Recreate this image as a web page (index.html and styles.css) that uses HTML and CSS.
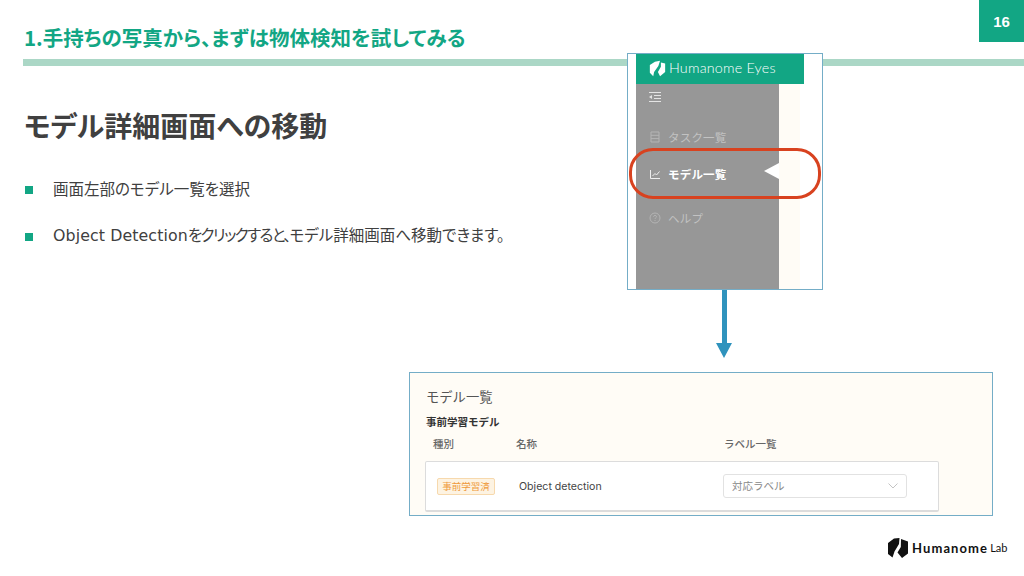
FILE: index.html
```html
<!DOCTYPE html>
<html lang="ja">
<head>
<meta charset="utf-8">
<title>モデル詳細画面への移動</title>
<link rel="stylesheet" href="styles.css">
</head>
<body>
<div class="slide">
  <div class="page-no">16</div>
  <header class="head">
    <h1 class="head-title">1.手持ちの写真から、まずは物体検知を試してみる</h1>
    <div class="head-bar"></div>
  </header>
  <main class="body">
    <h2 class="sub-title">モデル詳細画面への移動</h2>
    <ul class="points">
      <li class="point"><span class="mark"></span><span>画面左部のモデル一覧を選択</span></li>
      <li class="point"><span class="mark"></span><span><span class="latin">Object Detection</span><span class="tight">をクリックすると、</span>モデル詳細画面へ移動できます。</span></li>
    </ul>
  </main>

  <section class="shot-nav">
    <div class="nav-brand">
      <svg class="brand-icon" viewBox="0 0 20 20"><path d="M7 2L13 1L11 7L6 14L5 19L1 15V6Z" fill="#fff"/><path d="M14 3L19 4V14L13 19L10.500 14L14 8Z" fill="#fff"/></svg>
      <span class="brand-text">Humanome Eyes</span>
    </div>
    <div class="nav-main">
      <nav class="nav-side">
        <svg class="nav-toggle" viewBox="0 0 12 10"><path d="M0 .5H12M5 3.500H12M5 6.500H12M0 9.500H12" stroke="#e4e4e4" fill="none"/><path d="M0 5L3 3V7Z" fill="#e4e4e4"/></svg>
        <div class="nav-item">
          <svg class="nav-icon" viewBox="0 0 12 12"><path d="M2 1H10V11H2ZM2 4.300H10M2 7.600H10" fill="none" stroke="#b4b4b4"/></svg>
          <span>タスク一覧</span>
        </div>
        <div class="nav-item nav-on">
          <svg class="nav-icon" viewBox="0 0 12 12"><path d="M1.500 2V10.500H11M3.500 8L6 5.500L7.500 7L10.500 3.500" fill="none" stroke="#eee"/></svg>
          <span>モデル一覧</span>
        </div>
        <div class="nav-item nav-help">
          <svg class="nav-icon" viewBox="0 0 12 12"><circle cx="6" cy="6" r="5" fill="none" stroke="#b4b4b4"/><path d="M4.500 4.700C4.600 3 7.500 3 7.500 4.700C7.500 5.800 6 5.800 6 7" fill="none" stroke="#b4b4b4"/><path d="M5.500 8h1v1h-1z" fill="#b4b4b4"/></svg>
          <span>ヘルプ</span>
        </div>
      </nav>
      <div class="nav-cream"></div>
    </div>
    <div class="nav-pointer"></div>
    <div class="nav-ring"></div>
  </section>

  <div class="flow-arrow"><div class="flow-line"></div><div class="flow-head"></div></div>

  <section class="shot-list">
    <div class="list-title">モデル一覧</div>
    <div class="list-sub">事前学習モデル</div>
    <div class="list-cols">
      <span>種別</span><span>名称</span><span>ラベル一覧</span>
    </div>
    <div class="list-card">
      <div class="tag-cell"><span class="tag">事前学習済</span></div>
      <div class="model-name">Object detection</div>
      <div class="select">
        <span>対応ラベル</span>
        <svg class="chev" viewBox="0 0 10 6"><path d="M.5 .5L5 5L9.500 .5" fill="none" stroke="#c4c4c4"/></svg>
      </div>
    </div>
  </section>

  <footer class="logo">
    <svg class="logo-icon" viewBox="0 0 20 20"><path d="M6 .5L11.500 0L11 6L6.500 13.500L4.500 19.500L0 16V5Z" fill="#111"/><path d="M13 1L20 3.500V15.500L14 20L9.500 14.500L12.800 9Z" fill="#111"/></svg>
    <span class="logo-name">Humanome</span><span class="logo-lab">Lab</span>
  </footer>
</div>
</body>
</html>
```
FILE: styles.css
```css
* { box-sizing: border-box; margin: 0; padding: 0; }
html, body { width: 1024px; height: 576px; overflow: hidden; background: #fff; }
body { font-family: "Noto Sans CJK JP", "Noto Sans", sans-serif; color: #404040; }
.slide { position: relative; width: 1024px; height: 576px; background: #fff; }

.page-no { position: absolute; top: 0; right: 0; width: 45px; height: 42px; background: #12a684; color: #fff; font: bold 15px/44px "Liberation Sans", sans-serif; text-align: center; }

.head { padding: 23px 0 0 23px; }
.head-title { font-size: 20.500px; line-height: 28px; font-weight: 700; color: #12a684; padding-left: 1px; font-feature-settings: "palt"; }
.head-bar { height: 7px; margin-top: 8px; background: #abd7c6; }

.body { padding: 39px 0 0 24px; }
.sub-title { font-size: 28px; line-height: 40px; font-weight: 700; color: #404040; font-feature-settings: "palt"; }
.points { list-style: none; margin-top: 32px; display: flex; flex-direction: column; gap: 24px; }
.point { display: flex; align-items: center; font-size: 15.500px; line-height: 22px; color: #404040; font-feature-settings: "palt"; }
.mark { width: 8px; height: 8px; margin: 4px 20px 0 1px; background: #12a684; flex: none; }
.latin { font-family: "DejaVu Sans", sans-serif; font-size: 15.800px; letter-spacing: .1px; }
.tight { letter-spacing: -.1em; }

.shot-nav { position: absolute; left: 627px; top: 53px; width: 196px; height: 237px; border: 1px solid #74adc7; padding-left: 8px; background: #fff; display: flex; flex-direction: column; }
.nav-brand { width: 168px; height: 30px; flex: none; background: #12a684; display: flex; align-items: center; padding: 0 0 2px 13px; gap: 3px; color: #fff; }
.brand-icon { width: 17px; height: 17px; flex: none; }
.brand-text { font: 300 14.300px/16px "Lato", sans-serif; letter-spacing: .2px; }
.nav-main { flex: 1; display: flex; }
.nav-side { width: 143px; background: #979797; display: flex; flex-direction: column; padding: 8px 0 0 13px; color: #c2c2c2; }
.nav-toggle { width: 12px; height: 10px; margin-bottom: 16px; }
.nav-item { display: flex; align-items: center; gap: 7px; height: 37px; font-size: 11.500px; letter-spacing: .2px; }
.nav-on { color: #fff; font-weight: 700; }
.nav-help { margin-top: 7px; }
.nav-icon { width: 12px; height: 12px; flex: none; }
.nav-cream { width: 21px; background: #fffcf6; }
.nav-pointer { position: absolute; left: 136px; top: 109px; width: 0; height: 0; border-style: solid; border-width: 8px 15px 8px 0; border-color: transparent #fff transparent transparent; }
.nav-ring { position: absolute; left: 1px; top: 94px; width: 192px; height: 51px; border: 3px solid #d8421f; border-radius: 24px; }

.flow-arrow { position: absolute; left: 716px; top: 290px; width: 16px; display: flex; flex-direction: column; align-items: center; }
.flow-line { width: 5px; height: 53px; background: #2f93bd; }
.flow-head { width: 0; height: 0; border-style: solid; border-width: 15px 8px 0; border-color: #2f93bd transparent transparent; }

.shot-list { position: absolute; left: 409px; top: 372px; width: 584px; height: 144px; border: 1px solid #74adc7; background: #fffcf6; padding: 14px 53px 0 16px; display: flex; flex-direction: column; }
.list-title { font-size: 13.300px; line-height: 20px; color: #555; }
.list-sub { font-size: 10.500px; line-height: 16px; font-weight: 700; color: #333; margin-top: 7px; }
.list-cols { display: grid; grid-template-columns: 83px 208px 1fr; padding-left: 7px; margin-top: 6px; font-size: 10.500px; line-height: 16px; font-weight: 500; color: #666; height: 25px; }
.list-card { height: 51px; margin-left: -1px; background: #fff; border: 1px solid #dcdcdc; border-bottom-width: 2px; border-radius: 2px; display: grid; grid-template-columns: 82px 204px 184px; align-items: center; padding: 1px 0 0 11px; }
.tag-cell { display: flex; }
.tag { width: 58px; height: 17px; border: 1px solid #f7d9ad; border-radius: 2px; background: #fdf3e2; color: #ef9a3c; font-size: 9.500px; line-height: 15px; text-align: center; }
.model-name { font: 10.600px/14px "Inter", "Liberation Sans", sans-serif; color: #444; }
.select { height: 24px; margin-top: -2px; border: 1px solid #e2e2e2; border-radius: 3px; display: flex; align-items: center; justify-content: space-between; padding: 0 8px; font-size: 10.500px; color: #888; }
.chev { width: 10px; height: 6px; }

.logo { position: absolute; left: 888px; top: 538px; display: flex; align-items: center; height: 20px; color: #111; }
.logo-icon { width: 20px; height: 20px; margin-right: 4px; flex: none; }
.logo-name { font: 700 13px/20px "Lato", sans-serif; letter-spacing: 1.100px; }
.logo-lab { font: 400 11px/20px "Lato", sans-serif; margin-left: 2px; }
```
